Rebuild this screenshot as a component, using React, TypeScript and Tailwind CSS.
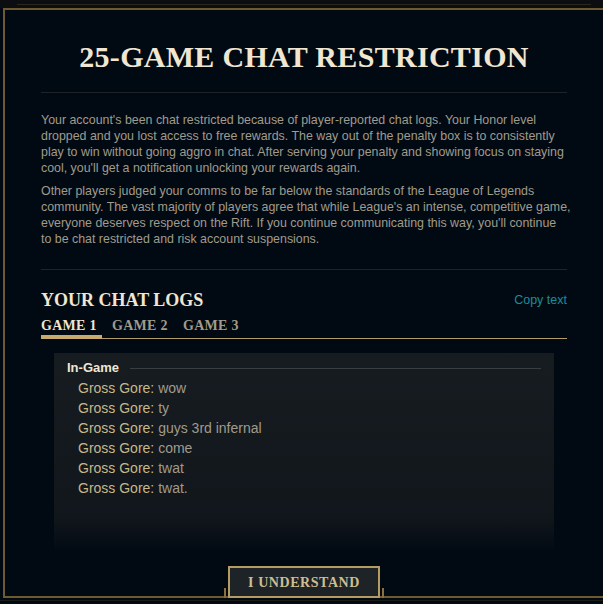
import React from "react";

const para1 = [
  "Your account's been chat restricted because of player-reported chat logs. Your Honor level",
  "dropped and you lost access to free rewards. The way out of the penalty box is to consistently",
  "play to win without going aggro in chat. After serving your penalty and showing focus on staying",
  "cool, you'll get a notification unlocking your rewards again.",
];

const para2 = [
  "Other players judged your comms to be far below the standards of the League of Legends",
  "community. The vast majority of players agree that while League's an intense, competitive game,",
  "everyone deserves respect on the Rift. If you continue communicating this way, you'll continue",
  "to be chat restricted and risk account suspensions.",
];

const chatLog = [
  { name: "Gross Gore", text: "wow" },
  { name: "Gross Gore", text: "ty" },
  { name: "Gross Gore", text: "guys 3rd infernal" },
  { name: "Gross Gore", text: "come" },
  { name: "Gross Gore", text: "twat" },
  { name: "Gross Gore", text: "twat." },
];

const serif = "font-['Liberation_Serif',serif]";
const sans = "font-['Liberation_Sans',Arial,sans-serif]";

function Paragraph({ lines }: { lines: string[] }) {
  return (
    <p className="text-[12.4px] leading-[16px] text-[#a09b8c]">
      {lines.map((line, i) => (
        <span key={i} className="block whitespace-nowrap">
          {line}
        </span>
      ))}
    </p>
  );
}

function ChatTabs() {
  const tabs = ["GAME 1", "GAME 2", "GAME 3"];
  return (
    <div className="flex gap-[10px] border-b border-[#b39c68]">
      {tabs.map((tab, i) => (
        <div
          key={tab}
          className={`w-[61px] h-[18px] ${serif} font-bold text-[14px] leading-[18px] tracking-[0.02em] ${
            i === 0
              ? "text-[#f0e6d2] h-[22px] border-b-[4px] border-[#c8aa6e] -mb-px"
              : "text-[#a09b8c]"
          }`}
        >
          {tab}
        </div>
      ))}
    </div>
  );
}

function ChatBox() {
  return (
    <div className="relative mx-[13px] mt-[14px] h-[199px] bg-gradient-to-b from-[#171c21] to-[#10151b] pl-[13px] pr-[13px] pt-[7px] overflow-hidden">
      <div className="flex items-center">
        <span className={`${sans} font-bold text-[13px] leading-[16px] text-[#f0e6d2]`}>In-Game</span>
        <div className="ml-[11px] h-px flex-1 bg-[#3a3d42]" />
      </div>
      <div className={`mt-[2px] pl-[11px] ${sans} text-[14px] leading-[20px]`}>
        {chatLog.map((msg, i) => (
          <div key={i} className="whitespace-nowrap">
            <span className="text-[#c8b98a]">{msg.name}: </span>
            <span className="text-[#a09b8c]">{msg.text}</span>
          </div>
        ))}
      </div>
      <div className="absolute inset-x-0 bottom-0 h-[34px] bg-gradient-to-b from-transparent to-[#010a13]" />
    </div>
  );
}

export default function App() {
  return (
    <div className={`w-[603px] h-[604px] bg-[#010a13] overflow-hidden ${sans}`}>
      <div className="h-[8px] bg-[#0b0d10] pt-[4px] pl-[17px] pr-[12px]">
        <div className="h-px bg-[#2b271d]" />
      </div>
      <div className="ml-[3px] h-[590px] border-l-2 border-t-2 border-b-2 border-[#6e5a30] flex flex-col px-[36px]">
        <h1
          className={`mt-[29px] text-center ${serif} font-bold text-[30px] leading-[36px] tracking-[0.01em] text-[#f0e6d2]`}
        >
          25-GAME CHAT RESTRICTION
        </h1>
        <div className="mt-[17px] h-px bg-[#1e2328]" />

        <div className="mt-[19px] flex flex-col gap-[7px]">
          <Paragraph lines={para1} />
          <Paragraph lines={para2} />
        </div>

        <div className="mt-[22px] h-px bg-[#1e2328]" />

        <div className="mt-[20px] flex items-center justify-between">
          <h2 className={`${serif} font-bold text-[18px] leading-[20px] text-[#f0e6d2]`}>
            YOUR CHAT LOGS
          </h2>
          <button className="text-[12.5px] leading-[20px] text-[#1b8c9c]">Copy text</button>
        </div>

        <div className="mt-[7px]">
          <ChatTabs />
        </div>

        <ChatBox />

        <div className="mt-[14px] -mb-[2px] flex items-end justify-center gap-[2px] relative z-10">
          <div className="w-[2px] h-[10px] bg-[#8a7040]" />
          <button
            className={`w-[152px] h-[32px] border-2 border-[#b59c62] bg-[#1e2328] ${serif} font-bold text-[14px] tracking-[0.04em] text-[#cdbe91]`}
          >
            I UNDERSTAND
          </button>
          <div className="w-[2px] h-[10px] bg-[#8a7040]" />
        </div>
      </div>
      <div className="mt-[2px] h-px bg-[#1c1a14]" />
    </div>
  );
}
